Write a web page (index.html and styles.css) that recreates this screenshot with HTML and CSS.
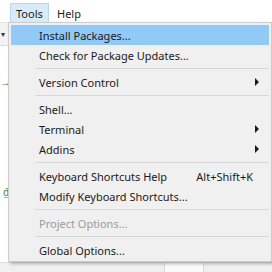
FILE: index.html
```html
<!DOCTYPE html>
<html lang="en">

<head>
    <meta charset="UTF-8">
    <meta name="viewport" content="width=device-width, initial-scale=1.0">
    <title>Tools Menu</title>
    <link rel="stylesheet" href="styles.css">
</head>

<body>
    <div class="app">
        <!-- Menu bar -->
        <div class="menubar">
            <span class="menu-title open">Tools</span>
            <span class="menu-title">Help</span>
        </div>

        <!-- Workspace behind the menu -->
        <div class="toolbar">
            <span class="tb-arrow">&#9662;</span>
        </div>
        <div class="workspace">
            <div class="left-strip">
                <span class="go-arrow">&#8594;</span>
                <span class="green-mark">&#8363;</span>
            </div>
            <div class="right-strip">
                <span class="bit blue">c</span>
                <span class="bit brown">f</span>
                <span class="bit brown2">f</span>
                <span class="bit dark">e</span>
            </div>
        </div>
        <div class="statusbar">
            <span class="tab"></span>
        </div>

        <!-- Tools dropdown -->
        <div class="dropdown">
            <div class="item active"><span>Install Packages...</span></div>
            <div class="item"><span>Check for Package Updates...</span></div>
            <div class="sep"></div>
            <div class="item"><span>Version Control</span><span class="sub"></span></div>
            <div class="sep"></div>
            <div class="item"><span>Shell...</span></div>
            <div class="item"><span>Terminal</span><span class="sub"></span></div>
            <div class="item"><span>Addins</span><span class="sub"></span></div>
            <div class="sep"></div>
            <div class="item"><span>Keyboard Shortcuts Help</span><span class="key">Alt+Shift+K</span></div>
            <div class="item"><span>Modify Keyboard Shortcuts...</span></div>
            <div class="sep"></div>
            <div class="item disabled"><span>Project Options...</span></div>
            <div class="sep"></div>
            <div class="item"><span>Global Options...</span></div>
        </div>
    </div>
</body>

</html>
```

FILE: styles.css
```css
body {
    margin: 0;
    font-family: "Noto Sans", "Open Sans", sans-serif;
    font-size: 11px;
    color: #1a1a1a;
    background-color: #fff;
}

.app {
    position: relative;
    width: 272px;
    height: 272px;
    overflow: hidden;
    display: flex;
    flex-direction: column;
}

/* Menu bar */
.menubar {
    height: 22px;
    display: flex;
    align-items: flex-end;
    padding-left: 10px;
    border-bottom: 1px solid #e3e3e3;
}

.menu-title {
    height: 19px;
    line-height: 19px;
    padding: 0 7px;
    border: 1px solid transparent;
    box-sizing: border-box;
}

.menu-title.open {
    width: 39px;
    padding: 0 5px;
    background-color: #d9ebf9;
    border-color: #b5d8f4;
    border-bottom: none;
}

/* Toolbar strip */
.toolbar {
    height: 22px;
    background-color: #f3f3f3;
    border-bottom: 1px solid #dcdcdc;
}

.tb-arrow {
    display: inline-block;
    font-size: 8px;
    line-height: 22px;
    padding-left: 1px;
    color: #333;
}

.workspace {
    flex: 1;
    display: flex;
    justify-content: space-between;
}

.left-strip {
    width: 8px;
    display: flex;
    flex-direction: column;
    padding-top: 31px;
}

.go-arrow {
    color: #1e9e3a;
    font-size: 11px;
    line-height: 10px;
    font-weight: bold;
}

.green-mark {
    color: #2e8b3d;
    font-size: 10px;
    margin-top: 98px;
    padding-left: 3px;
}

.right-strip {
    width: 5px;
    border-left: 1px solid #e2e2e2;
    display: flex;
    flex-direction: column;
    padding-top: 10px;
}

.bit {
    font-size: 10px;
    line-height: 10px;
    font-weight: bold;
    margin-bottom: 8px;
}

.blue { color: #1a5fb4; }
.brown { color: #9a5a12; }
.brown2 { color: #b0701e; margin-top: 18px; }
.dark { color: #6a3e1a; margin-top: 56px; }

.statusbar {
    height: 9px;
    background-color: #f0f0f0;
    border-top: 1px solid #e0e0e0;
    padding-left: 164px;
}

.statusbar .tab {
    display: block;
    width: 38px;
    height: 9px;
    background-color: #fafafa;
    border-left: 1px solid #dcdcdc;
    border-right: 1px solid #dcdcdc;
}

/* Dropdown */
.dropdown {
    position: absolute;
    left: 8px;
    top: 22px;
    width: 258px;
    padding: 2px 2px 1px;
    background-color: #f0f0f0;
    border: 1px solid #cccccc;
    box-shadow: 2px 2px 3px rgba(0, 0, 0, 0.25);
}

.item {
    height: 20px;
    display: flex;
    align-items: center;
    justify-content: space-between;
    padding: 0 13px 0 28px;
}

.item.active {
    background-color: #91c9f7;
}

.item.disabled {
    color: #9a9a9a;
}

.key {
    margin-right: 3px;
}

.sub {
    width: 0;
    height: 0;
    border-top: 4px solid transparent;
    border-bottom: 4px solid transparent;
    border-left: 4px solid #1a1a1a;
    margin-right: -3px;
}

.sep {
    height: 7px;
    margin-left: 24px;
    background: linear-gradient(#d7d7d7, #d7d7d7) no-repeat 0 3px / 100% 1px;
}
```
